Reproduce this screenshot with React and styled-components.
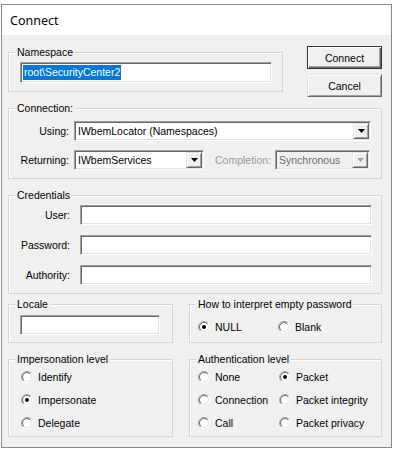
import React from "react";
import styled, { createGlobalStyle } from "styled-components";

const Global = createGlobalStyle`
  html, body { margin: 0; padding: 0; }
  body {
    background: #ffffff;
    font-family: "Liberation Sans", Arial, sans-serif;
    font-size: 10.5px;
    color: #000;
  }
  * { box-sizing: border-box; }
`;

const Window = styled.div`
  margin: 4px 0 0 1px;
  width: 391px;
  height: 444px;
  border: 1px solid #888888;
  background: #f0f0f0;
  display: flex;
  flex-direction: column;
`;

const TitleBar = styled.div`
  height: 30px;
  background: #ffffff;
  display: flex;
  align-items: center;
  padding-left: 8px;
  font-family: "Noto Sans", "Liberation Sans", sans-serif;
  font-size: 12.5px;
  color: #000;
`;

const Client = styled.div`
  flex: 1;
  padding: 11px 8px 0 6px;
  display: flex;
  flex-direction: column;
`;

const Row = styled.div`
  display: flex;
  align-items: flex-start;
  margin-top: ${(p) => p.$mt || 0}px;
`;

const GroupBox = styled.div`
  position: relative;
  width: ${(p) => p.$w}px;
  height: ${(p) => p.$h}px;
  margin-top: ${(p) => p.$mt || 0}px;
  margin-left: ${(p) => p.$ml || 0}px;
  border: 1px solid #d5d5d5;
  box-shadow: inset 1px 1px 0 #ffffff;
  padding: ${(p) => p.$pad || "0"};
  flex-shrink: 0;
`;

const Caption = styled.span`
  position: absolute;
  top: -7px;
  left: 6px;
  padding: 0 2px;
  line-height: 13px;
  background: #f0f0f0;
  white-space: nowrap;
`;

const ButtonColumn = styled.div`
  margin-left: 24px;
  width: 75px;
  display: flex;
  flex-direction: column;
  gap: 5px;
  flex-shrink: 0;
`;

const PushButton = styled.div`
  height: 23px;
  display: flex;
  align-items: center;
  justify-content: center;
  background: #f0f0f0;
  border: 1px solid;
  border-color: ${(p) => (p.$default ? "#333 #333 #333 #333" : "#e3e3e3 #696969 #696969 #e3e3e3")};
  box-shadow: ${(p) =>
    p.$default
      ? "inset 1px 1px 0 #ffffff, inset -1px -1px 0 #696969, inset -2px -2px 0 #a0a0a0"
      : "inset 1px 1px 0 #ffffff, inset -1px -1px 0 #a0a0a0"};
`;

const Field = styled.div`
  width: ${(p) => p.$w}px;
  height: ${(p) => p.$h || 20}px;
  background: ${(p) => (p.$disabled ? "#f0f0f0" : "#ffffff")};
  border: 1px solid;
  border-color: #a0a0a0 #ffffff #ffffff #a0a0a0;
  box-shadow: inset 1px 1px 0 #696969, inset -1px -1px 0 #e3e3e3;
  display: flex;
  align-items: center;
  padding: 2px 1px 2px 2px;
  margin-left: ${(p) => p.$ml || 0}px;
  flex-shrink: 0;
  color: ${(p) => (p.$disabled ? "#6d6d6d" : "#000")};
  white-space: nowrap;
  overflow: hidden;
`;

const Selected = styled.span`
  background: #0078d7;
  color: #ffffff;
  padding: 1px 1px;
  line-height: 13px;
`;

const ComboText = styled.span`
  flex: 1;
  padding-left: 1px;
  overflow: hidden;
`;

const DropButton = styled.div`
  width: 16px;
  height: 16px;
  background: #f0f0f0;
  border: 1px solid;
  border-color: #e3e3e3 #696969 #696969 #e3e3e3;
  box-shadow: inset 1px 1px 0 #ffffff, inset -1px -1px 0 #a0a0a0;
  display: flex;
  align-items: center;
  justify-content: center;
  flex-shrink: 0;
`;

const Rows = styled.div`
  display: flex;
  flex-direction: column;
  gap: ${(p) => p.$gap}px;
`;

const FieldRow = styled.div`
  display: flex;
  align-items: center;
`;

const FieldLabel = styled.span`
  width: ${(p) => p.$w}px;
  margin-left: ${(p) => p.$ml || 0}px;
  margin-right: ${(p) => p.$mr || 0}px;
  text-align: ${(p) => p.$align || "right"};
  color: ${(p) => (p.$disabled ? "#9a9a9a" : "#000")};
  white-space: nowrap;
  flex-shrink: 0;
`;

const RadioGrid = styled.div`
  display: grid;
  grid-template-columns: ${(p) => p.$cols};
  row-gap: ${(p) => p.$gap || 0}px;
`;

const RadioItem = styled.div`
  display: flex;
  align-items: center;
  gap: 5px;
  height: 16px;
  white-space: nowrap;
`;

const RadioSvg = styled.svg`
  width: 12px;
  height: 12px;
  flex-shrink: 0;
`;

function Radio({ checked }) {
  return (
    <RadioSvg viewBox="0 0 12 12">
      <defs>
        <linearGradient id="rOuter" x1="0" y1="0" x2="1" y2="1">
          <stop offset="0.5" stopColor="#a0a0a0" />
          <stop offset="0.5" stopColor="#ffffff" />
        </linearGradient>
        <linearGradient id="rInner" x1="0" y1="0" x2="1" y2="1">
          <stop offset="0.5" stopColor="#696969" />
          <stop offset="0.5" stopColor="#e3e3e3" />
        </linearGradient>
      </defs>
      <circle cx="6" cy="6" r="5.5" fill="none" stroke="url(#rOuter)" strokeWidth="1" />
      <circle cx="6" cy="6" r="4.5" fill="#ffffff" stroke="url(#rInner)" strokeWidth="1" />
      {checked && <circle cx="6" cy="6" r="2" fill="#000000" />}
    </RadioSvg>
  );
}

function Arrow({ disabled }) {
  return (
    <svg width="7" height="4" viewBox="0 0 7 4">
      <polygon points="0,0 7,0 3.5,4" fill={disabled ? "#a0a0a0" : "#000000"} />
    </svg>
  );
}

function Combo({ w, ml, text, disabled }) {
  return (
    <Field $w={w} $ml={ml} $disabled={disabled}>
      <ComboText>{text}</ComboText>
      <DropButton>
        <Arrow disabled={disabled} />
      </DropButton>
    </Field>
  );
}

function RadioOption({ label, checked }) {
  return (
    <RadioItem>
      <Radio checked={checked} />
      <span>{label}</span>
    </RadioItem>
  );
}

export default function App() {
  return (
    <>
      <Global />
      <Window>
        <TitleBar>Connect</TitleBar>
        <Client>
          <Row>
            <GroupBox $w={275} $h={40} $mt={6} $pad="9px 0 0 11px">
              <Caption>Namespace</Caption>
              <Field $w={252} $h={21}>
                <Selected>root\SecurityCenter2</Selected>
              </Field>
            </GroupBox>
            <ButtonColumn>
              <PushButton $default>Connect</PushButton>
              <PushButton>Cancel</PushButton>
            </ButtonColumn>
          </Row>

          <GroupBox $w={374} $h={71} $mt={11} $pad="12px 0 0 0">
            <Caption>Connection:</Caption>
            <Rows $gap={9}>
              <FieldRow>
                <FieldLabel $w={60} $mr={5}>Using:</FieldLabel>
                <Combo w={297} text="IWbemLocator (Namespaces)" />
              </FieldRow>
              <FieldRow>
                <FieldLabel $w={60} $mr={5}>Returning:</FieldLabel>
                <Combo w={130} text="IWbemServices" />
                <FieldLabel $w={60} $ml={11} $align="left" $disabled>Completion:</FieldLabel>
                <Combo w={95} text="Synchronous" disabled />
              </FieldRow>
            </Rows>
          </GroupBox>

          <GroupBox $w={374} $h={99} $mt={16} $pad="9px 0 0 0">
            <Caption>Credentials</Caption>
            <Rows $gap={10}>
              <FieldRow>
                <FieldLabel $w={61} $mr={10}>User:</FieldLabel>
                <Field $w={292} />
              </FieldRow>
              <FieldRow>
                <FieldLabel $w={61} $mr={10}>Password:</FieldLabel>
                <Field $w={292} />
              </FieldRow>
              <FieldRow>
                <FieldLabel $w={61} $mr={10}>Authority:</FieldLabel>
                <Field $w={292} />
              </FieldRow>
            </Rows>
          </GroupBox>

          <Row $mt={10}>
            <GroupBox $w={165} $h={39} $pad="10px 0 0 11px">
              <Caption>Locale</Caption>
              <Field $w={140} />
            </GroupBox>
            <GroupBox $w={193} $h={39} $ml={16} $pad="14px 0 0 8px">
              <Caption>How to interpret empty password</Caption>
              <RadioGrid $cols="80px auto">
                <RadioOption label="NULL" checked />
                <RadioOption label="Blank" />
              </RadioGrid>
            </GroupBox>
          </Row>

          <Row $mt={16}>
            <GroupBox $w={165} $h={78} $pad="9px 0 0 12px">
              <Caption>Impersonation level</Caption>
              <RadioGrid $cols="auto" $gap={7}>
                <RadioOption label="Identify" />
                <RadioOption label="Impersonate" checked />
                <RadioOption label="Delegate" />
              </RadioGrid>
            </GroupBox>
            <GroupBox $w={193} $h={78} $ml={16} $pad="9px 0 0 8px">
              <Caption>Authentication level</Caption>
              <RadioGrid $cols="81px auto" $gap={7}>
                <RadioOption label="None" />
                <RadioOption label="Packet" checked />
                <RadioOption label="Connection" />
                <RadioOption label="Packet integrity" />
                <RadioOption label="Call" />
                <RadioOption label="Packet privacy" />
              </RadioGrid>
            </GroupBox>
          </Row>
        </Client>
      </Window>
    </>
  );
}
